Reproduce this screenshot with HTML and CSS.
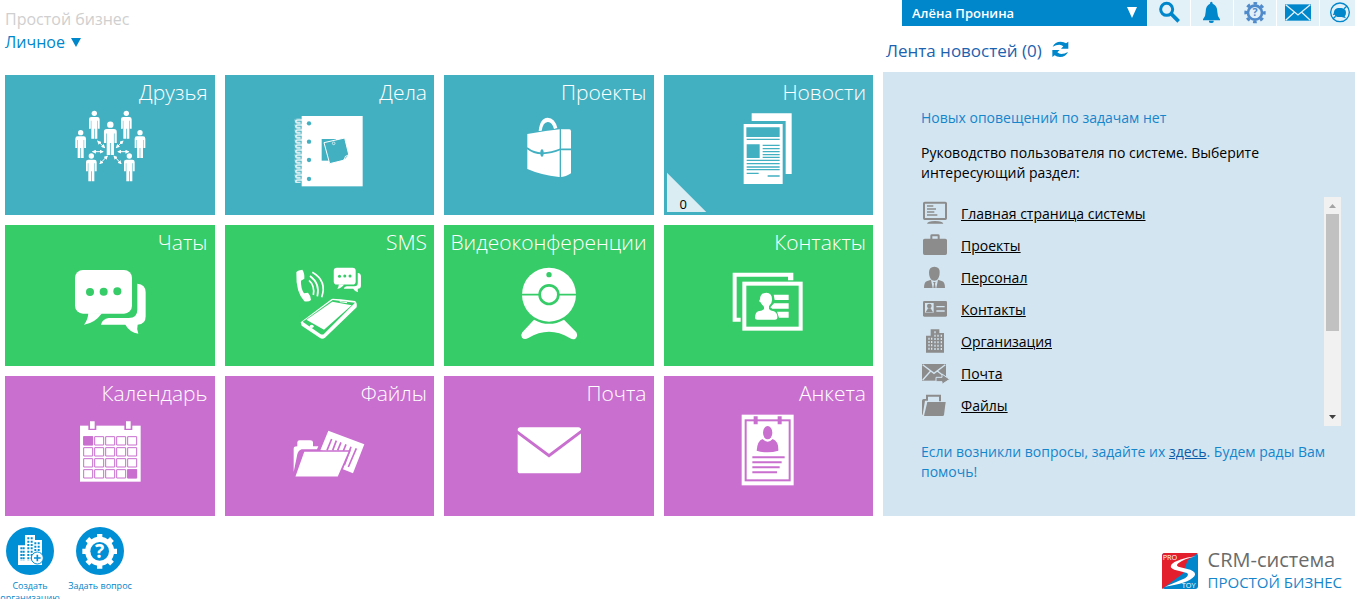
FILE: index.html
```html
<!DOCTYPE html>
<html lang="ru">
<head>
<meta charset="utf-8">
<title>Простой бизнес</title>
<link rel="stylesheet" href="styles.css">
</head>
<body>
<div class="app">
  <main class="workspace">
    <section class="left">
      <header class="heading">
        <h1 class="company">Простой бизнес</h1>
        <button class="section-menu" type="button">Личное
          <svg class="caret" viewBox="0 0 10 9" aria-hidden="true"><path d="M0 0H10L5 9Z"/></svg>
        </button>
      </header>
      <nav class="tiles">
        <a class="tile teal" href="#friends"><span class="tile-title">Друзья</span>
          <svg class="tile-icon" viewBox="209 321 240 252" aria-hidden="true">
            <defs>
              <g id="person"><circle r="8"/><path d="M-9 11H9Q16 11 16 18V46H10.500V22H9V76H1V46H-1V76H-9V22H-10.500V46H-16V18Q-16 11 -9 11Z"/></g>
              <marker id="tip" viewBox="0 0 10 10" refX="8" refY="5" markerWidth="4" markerHeight="4" orient="auto-start-reverse"><path d="M0 0L10 5L0 10Z" fill="#fff"/></marker>
            </defs>
            <use href="#person" x="282" y="340"/><use href="#person" x="378" y="340"/>
            <use href="#person" x="241" y="398"/><use href="#person" x="419" y="398"/>
            <use href="#person" x="273" y="468"/><use href="#person" x="387" y="468"/>
            <use href="#person" transform="translate(330 374) scale(1.2)"/>
            <g stroke="#fff" stroke-width="3">
              <path d="M292 423L313 443" marker-start="url(#tip)" marker-end="url(#tip)"/>
              <path d="M368 423L348 443" marker-start="url(#tip)" marker-end="url(#tip)"/>
              <path d="M277 455H308" marker-start="url(#tip)" marker-end="url(#tip)"/>
              <path d="M353 455H385" marker-start="url(#tip)" marker-end="url(#tip)"/>
              <path d="M321 468L299 491" marker-start="url(#tip)" marker-end="url(#tip)"/>
              <path d="M341 468L362 491" marker-start="url(#tip)" marker-end="url(#tip)"/>
            </g>
          </svg></a>
        <a class="tile teal" href="#todo"><span class="tile-title">Дела</span>
          <svg class="tile-icon" viewBox="868 321 240 252" aria-hidden="true">
            <defs><pattern id="spiral" x="885" y="356" width="22" height="15" patternUnits="userSpaceOnUse"><path d="M22 4H10Q3 4 3 8T10 12H18" fill="none" stroke="#fff" stroke-width="4.500"/></pattern></defs>
            <rect x="885" y="356" width="22" height="193" fill="url(#spiral)"/>
            <rect x="906" y="348" width="183" height="211"/>
            <g class="ink"><circle cx="928" cy="370" r="6.500"/><circle cx="928" cy="425" r="6.500"/><circle cx="928" cy="480" r="6.500"/><circle cx="928" cy="537" r="6.500"/>
            <path d="M966 417H1009V482H966Z"/></g>
            <path class="ink" d="M973 428L1035 414L1047 463L1031 481L990 491Z" stroke="#fff" stroke-width="3"/>
            <path d="M1048 462L1036 469L1031 482L1050 482Z"/>
            <path class="ink" d="M1046 465L1038 471L1034 479Z"/>
            <circle cx="1002" cy="430" r="4" fill="none" stroke="#fff" stroke-width="2"/>
          </svg></a>
        <a class="tile teal" href="#projects"><span class="tile-title">Проекты</span>
          <svg class="tile-icon" viewBox="206 111 240 252" aria-hidden="true">
            <path d="M295 183Q299 144 322 143Q344 144 351 174L341 177Q335 155 322 156Q308 157 304 182Z"/>
            <path d="M261 192Q310 183 358 178H387Q392 178 392 184V310Q376 322 356 321Q302 315 261 297Z"/>
            <path class="line" stroke-width="4" d="M360 177V322"/>
            <path class="line" stroke-width="5" d="M260 234Q280 250 305 250Q335 249 360 238H393"/>
            <ellipse class="ink" cx="305" cy="249" rx="5" ry="11"/>
          </svg></a>
        <a class="tile teal" href="#news"><span class="tile-title">Новости</span>
          <svg class="tile-icon" viewBox="865 111 240 252" aria-hidden="true">
            <path d="M936 130H1056V312H1038V153H936Z"/>
            <rect x="912" y="162" width="117" height="180"/>
            <path class="ink" d="M920 172H1020V201H920ZM921 223H960V264H921Z"/>
            <path class="line" stroke-width="4" d="M921 208H1020M969 226H1020M969 236H1020M969 245H1020M969 254H1020M969 262H1020M921 271H1020M921 281H1020M921 291H1020M921 299H1020M921 310H957M984 318H1020"/>
          </svg>
          <span class="corner"><span class="corner-count">0</span></span></a>
        <a class="tile green" href="#chats"><span class="tile-title">Чаты</span>
          <svg class="tile-icon" viewBox="209 112 240 252" aria-hidden="true">
            <g id="bubbles"><rect x="224" y="151" width="171" height="131" rx="24"/>
            <path d="M264 280Q263 300 251 315Q282 312 305 281Z"/>
            <path d="M411 192Q436 194 436 218V290Q436 315 412 315Q408 328 414 342Q388 338 375 315H302Q306 298 325 295H385Q411 295 411 270Z"/>
            <g fill="#36cc68"><circle cx="269" cy="217" r="12"/><circle cx="310" cy="216" r="12"/><circle cx="351" cy="215" r="12"/></g></g>
          </svg></a>
        <a class="tile green" href="#sms"><span class="tile-title">SMS</span>
          <svg class="tile-icon" viewBox="868 112 240 252" aria-hidden="true">
            <use href="#bubbles" transform="translate(916 86) scale(.385)"/>
            <path d="M890 158Q892 152 908 150Q915 160 914 177L904 183Q903 205 913 221L925 219Q935 230 934 241Q928 247 914 245Q888 218 890 158Z"/>
            <g fill="none" stroke="#fff" stroke-width="5"><path d="M928 182Q946 198 941 226"/><path d="M931 169Q962 192 953 230"/><path d="M938 158Q983 184 966 233"/></g>
            <path d="M903 308L996 238Q1000 236 1066 244Q1073 248 1071 263L976 354Q968 360 960 354L906 318Z"/>
            <path class="ink" d="M909 306L999 241L1066 249L972 344Q967 346 962 343Z"/>
            <path d="M920 300L998 246L1056 257L973 330Z"/><ellipse cx="936" cy="320" rx="6" ry="5"/><path d="M1020 246L1042 249" stroke="#fff" stroke-width="3"/>
          </svg></a>
        <a class="tile green" href="#video"><span class="tile-title">Видеоконференции</span>
          <svg class="tile-icon" viewBox="206 112 240 252" aria-hidden="true">
            <circle cx="326" cy="225" r="81"/>
            <path class="line" stroke-width="5" d="M244 225H408"/>
            <circle cx="326" cy="225" r="28" stroke="#36cc68" stroke-width="8"/>
            <circle class="ink" cx="326" cy="165" r="8"/>
            <path d="M281 300Q326 325 371 300L408 338Q414 350 405 357Q398 361 388 355Q326 318 264 355Q252 362 245 354Q240 346 246 338Z"/>
          </svg></a>
        <a class="tile green" href="#contacts"><span class="tile-title">Контакты</span>
          <svg class="tile-icon" viewBox="865 112 240 252" aria-hidden="true">
            <path d="M879 159H1061V182H1045V171H891V294H903V306H879Z"/>
            <rect x="914" y="192" width="169" height="135" fill="none" stroke="#fff" stroke-width="12"/>
            <path d="M980 219Q998 220 997 240Q998 250 988 260V268Q992 273 1003 275Q1014 280 1013 295Q1012 300 1006 300H953Q946 300 946 295Q946 278 956 275Q969 273 973 268V261Q965 254 962 247Q956 246 961 239Q961 220 980 219Z"/>
            <path d="M1002 225H1047V241H1005ZM1003 251H1047V267H998L992 263ZM1012 276H1047V294H1018Z"/>
          </svg></a>
        <a class="tile purple" href="#calendar"><span class="tile-title">Календарь</span>
          <svg class="tile-icon" viewBox="209 113 240 252" aria-hidden="true">
            <rect x="239" y="166" width="182" height="168"/>
            <path class="ink" d="M264 160H288V179H264ZM372 160H396V179H372Z"/>
            <path d="M269 153H283V175H269ZM377 153H391V175H377Z"/>
            <g class="line" stroke-width="3">
              <path d="M250 199h27v25h-27zM283 199h27v25h-27zM316 199h27v25h-27zM349 199h27v25h-27zM382 199h27v25h-27zM250 232h27v25h-27zM283 232h27v25h-27zM316 232h27v25h-27zM349 232h27v25h-27zM382 232h27v25h-27zM250 265h27v25h-27zM283 265h27v25h-27zM316 265h27v25h-27zM349 265h27v25h-27zM382 265h27v25h-27zM250 298h27v25h-27zM283 298h27v25h-27zM316 298h27v25h-27zM349 298h27v25h-27zM382 298h27v25h-27z"/>
            </g>
            <path class="ink" d="M249 198h29v27h-29zM381 297h29v27h-29z"/>
          </svg></a>
        <a class="tile purple" href="#files"><span class="tile-title">Файлы</span>
          <svg class="tile-icon" viewBox="868 113 240 252" aria-hidden="true">
            <path d="M986 181L1094 222L1060 309L1030 297L1040 260L962 240Z"/>
            <path class="line" stroke-width="5" d="M996 206L982 240M1010 211L999 240M1024 216L1014 240M1039 222L1031 242M1054 229L1034 285M1070 234L1046 290"/>
            <path d="M882 305V235Q882 228 893 228V216Q893 210 900 210H932Q940 210 940 216V228H956L952 237H906Q896 240 893 252Z"/>
            <path d="M912 242H1050L1016 321H884Z" stroke="#c96fcf" stroke-width="5"/>
          </svg></a>
        <a class="tile purple" href="#mail"><span class="tile-title">Почта</span>
          <svg class="tile-icon" viewBox="206 113 240 252" aria-hidden="true">
            <rect x="232" y="171" width="190" height="138" rx="8"/>
            <path class="line" stroke-width="9" d="M228 183L326 256L426 181"/>
          </svg></a>
        <a class="tile purple" href="#profile"><span class="tile-title">Анкета</span>
          <svg class="tile-icon" viewBox="865 113 240 252" aria-hidden="true">
            <rect x="906" y="133" width="156" height="212"/>
            <rect class="line" stroke-width="6" x="918" y="150" width="132" height="180"/>
            <g class="ink"><path d="M942 138H954V162H942ZM1014 138H1026V162H1014Z"/>
            <ellipse cx="984" cy="187" rx="14" ry="20"/>
            <path d="M969 206Q976 214 984 214Q992 214 999 206Q1017 212 1016 241Q984 251 951 241Q953 211 969 206Z"/></g>
            <path class="line" stroke-width="6" d="M938 261H1035M938 276H1026M938 291H1020M938 306H1012"/>
          </svg></a>
      </nav>
    </section>

    <aside class="right">
      <div class="toolbar">
        <div class="user">
          <select class="user-select" aria-label="Пользователь"><option>Алёна Пронина</option></select>
          <svg class="user-caret" viewBox="0 0 10 11" aria-hidden="true"><path d="M0 0H10L5 11Z"/></svg>
        </div>
        <button class="tool" type="button" aria-label="Поиск"><svg viewBox="819 0 96 78"><circle cx="860" cy="28" r="18" fill="none" stroke="#0086cb" stroke-width="9"/><path d="M873 41L896 64" stroke="#0086cb" stroke-width="11"/></svg></button>
        <button class="tool" type="button" aria-label="Уведомления"><svg viewBox="948 0 96 78"><path d="M994 5Q998 5 998 11Q1012 16 1012 36Q1012 50 1020 58V61H969V58Q977 50 977 36Q977 16 990 11Q990 5 994 5ZM987 62H1001V65Q1001 69 994 69T987 65Z"/></svg></button>
        <button class="tool" type="button" aria-label="Помощь"><svg class="soft" viewBox="1078 0 96 78"><circle cx="1126" cy="38" r="21" fill="none" stroke="#4f8acb" stroke-width="8"/><circle cx="1126" cy="38" r="28" fill="none" stroke="#4f8acb" stroke-width="8" stroke-dasharray="11 11" stroke-dashoffset="5.500"/><text class="gear-mark" x="1126" y="49" text-anchor="middle">?</text></svg></button>
        <button class="tool" type="button" aria-label="Почта"><svg viewBox="1206 0 96 78"><path d="M1215 13H1293V62H1215Z"/><path d="M1217 14L1254 45L1291 14M1217 61L1243 37M1291 61L1265 37" fill="none" stroke="#e2f0f8" stroke-width="4"/></svg></button>
        <button class="tool" type="button" aria-label="Чат"><svg viewBox="1335 0 96 78"><circle cx="1380" cy="37" r="28" fill="none" stroke="#0086cb" stroke-width="4"/><path d="M1374 24H1384Q1398 26 1398 38Q1398 45 1394 49L1398 55L1385 51H1378Q1366 51 1364 44L1358 46Q1362 40 1362 35Q1364 26 1374 24Z"/><path d="M1359 56L1367 49M1392 26L1401 18" stroke="#0086cb" stroke-width="4"/></svg></button>
      </div>
      <h2 class="feed-title">Лента новостей (0)
        <button class="refresh" type="button" aria-label="Обновить"><svg viewBox="515 122 51 51"><path d="M517 139Q524 124 541 124Q551 124 557 129L564 124V145H542L549 138Q544 133 537 133Q527 133 517 139ZM563 155Q556 170 539 170Q529 170 523 165L516 170V149H538L531 156Q536 161 543 161Q553 161 563 155Z"/></svg></button>
      </h2>
      <div class="panel">
        <p class="note">Новых оповещений по задачам нет</p>
        <p class="intro">Руководство пользователя по системе. Выберите интересующий раздел:</p>
        <div class="guide">
          <ul class="topics">
            <li class="topic"><svg viewBox="123 384 81 96"><path fill-rule="evenodd" d="M134 395H196Q201 395 201 400V445Q201 450 196 450H134Q129 450 129 445V400Q129 395 134 395ZM135 401V444H195V401ZM141 461Q143 453 165 453Q188 453 190 461Z"/><path d="M141 408H160M141 417H168M141 426H163M141 435H172" stroke="#8c8c8c" stroke-width="4"/></svg><a href="#g1">Главная страница системы</a></li>
            <li class="topic"><svg viewBox="123 480 81 96"><path fill-rule="evenodd" d="M129 511Q129 506 134 506H151V497Q151 493 156 493H174Q179 493 179 497V506H196Q201 506 201 511V550Q201 555 196 555H134Q129 555 129 550ZM157 499V506H173V499Z"/></svg><a href="#g2">Проекты</a></li>
            <li class="topic"><svg viewBox="123 576 81 96"><path d="M163 590Q180 591 179 607Q179 622 171 630Q163 634 155 630Q147 622 147 607Q147 591 163 590ZM132 654Q132 637 140 634L153 629L158 654ZM195 654Q195 637 187 634L174 629L169 654ZM159 636H167L165 641L167 654H160L162 641Z"/></svg><a href="#g3">Персонал</a></li>
            <li class="topic"><svg viewBox="123 -18 81 96"><path d="M133 3H197Q201 3 201 7V46Q201 50 197 50H133Q129 50 129 46V7Q129 3 133 3Z"/><path class="cut" d="M135 9H161V38H135Z"/><circle cx="148" cy="18" r="7"/><path d="M137 37L144 25H152L159 37Z"/><path d="M169 20H194M169 33H194" stroke="#d3e5f1" stroke-width="4"/></svg><a href="#g4">Контакты</a></li>
            <li class="topic"><svg viewBox="123 78 81 96"><path d="M138 107H152V88H178V99H192V158H138Z"/><path d="M147 113V153M155 113V153M165 94V153M174 104V153M184 104V153" stroke="#d3e5f1" stroke-width="4" stroke-dasharray="6 4"/></svg><a href="#g5">Организация</a></li>
            <li class="topic"><svg viewBox="123 174 81 96"><path d="M126 192H198V242H126Z"/><path d="M128 194L162 220L196 194M128 240L152 213M196 232L172 213" fill="none" stroke="#d3e5f1" stroke-width="4"/><path d="M168 232H186V222L209 238L186 253V245H168Z" stroke="#d3e5f1" stroke-width="3"/></svg><a href="#g6">Почта</a></li>
            <li class="topic"><svg viewBox="123 270 81 96"><path d="M126 344V302Q126 297 131 297H138V284H183V304H177V290H144V302H135L128 344Z"/><path d="M142 306H197L192 345Q191 348 188 348H132Z"/></svg><a href="#g7">Файлы</a></li>
          </ul>
          <div class="scrollbar" aria-hidden="true">
            <svg class="arrow up" viewBox="0 0 17 17"><path d="M5 11H12L8.500 7Z"/></svg>
            <div class="track"><div class="thumb"></div></div>
            <svg class="arrow down" viewBox="0 0 17 17"><path d="M5 6H12L8.500 10Z"/></svg>
          </div>
        </div>
        <p class="note">Если возникли вопросы, задайте их <a class="here" href="#ask">здесь</a>. Будем рады Вам помочь!</p>
      </div>
    </aside>
  </main>

  <footer class="footer">
    <div class="actions">
      <button class="action" type="button">
        <svg viewBox="18 36 144 144" aria-hidden="true"><circle cx="90" cy="108" r="72" class="disc"/>
          <path d="M54 91H75V60H105V75H126V150H54Z"/>
          <path d="M64 97V138M71 97V138" class="windows"/><path d="M85 67V138M95 67V138M106 82V110M116 82V110" class="windows"/>
          <circle cx="112" cy="129" r="18" stroke="#008fd5" stroke-width="3"/><path d="M102 129H122M112 119V139" class="windows solid"/></svg>
        <span>Создать организацию</span></button>
      <button class="action" type="button">
        <svg viewBox="228 36 144 144" aria-hidden="true"><circle cx="300" cy="108" r="72" class="disc"/>
          <circle cx="299" cy="109" r="34" fill="none" stroke="#fff" stroke-width="19"/>
          <path d="M299 57V161M247 109H351M262 72L336 146M262 146L336 72" stroke="#fff" stroke-width="16"/>
          <circle cx="299" cy="109" r="28" class="disc"/>
          <text class="ask-mark" x="299" y="130" text-anchor="middle">?</text></svg>
        <span class="one-line">Задать вопрос</span></button>
    </div>
    <a class="brand" href="#crm">
      <svg viewBox="63 38 108 108" aria-hidden="true">
        <rect x="63" y="38" width="108" height="108" rx="9" fill="#0086cb"/>
        <path d="M72 38H171L140 60L125 100L63 146V47Q63 38 72 38Z" fill="#e31e2d"/>
        <path d="M165 48Q110 55 92 72Q84 83 100 88L138 98Q146 104 132 114L72 139Q140 130 160 108Q168 96 148 88L112 79Q104 76 112 69Q128 56 165 48Z" fill="#fff"/>
        <text class="mini" x="65" y="60">PRO</text><text class="mini" x="122" y="143">TOY</text>
      </svg>
      <span class="brand-text"><span class="brand-crm">CRM-система</span><span class="brand-name">ПРОСТОЙ БИЗНЕС</span></span>
    </a>
  </footer>
</div>
</body>
</html>
```
FILE: styles.css
```css
* { box-sizing: border-box; }
body, h1, h2, p, ul { margin: 0; padding: 0; }
body {
  font-family: "Open Sans", "Noto Sans", sans-serif;
  font-size: 14px;
  line-height: 20px;
  color: #000;
  background: #fff;
}
button {
  border: 0;
  padding: 0;
  background: none;
  font: inherit;
  color: inherit;
  cursor: pointer;
}
svg { display: block; flex: none; }

.app {
  display: flex;
  flex-direction: column;
  height: 100vh;
  overflow: hidden;
}
.workspace {
  flex: 1;
  min-height: 0;
  display: grid;
  grid-template-columns: minmax(0, 868fr) minmax(0, 472fr);
  gap: 10px;
  padding-left: 5px;
}
.left, .right {
  display: flex;
  flex-direction: column;
  min-height: 0;
}

.heading {
  display: flex;
  flex-direction: column;
  align-items: flex-start;
  height: 75px;
  padding-top: 8px;
}
.company, .section-menu {
  font-size: 16px;
  line-height: 23px;
  font-weight: 400;
}
.company { color: #cfcfcf; }
.section-menu {
  display: flex;
  align-items: center;
  gap: 6px;
  color: #0086cb;
}
.caret { width: 10px; height: 9px; fill: #0086cb; }

.tiles {
  flex: 1;
  display: grid;
  grid-template-columns: repeat(4, minmax(0, 1fr));
  grid-template-rows: repeat(3, minmax(0, 1fr));
  gap: 10px;
}
.tile {
  position: relative;
  display: flex;
  flex-direction: column;
  align-items: center;
  color: #fff;
  text-decoration: none;
}
.teal { background: #43b0c2; --ink: #43b0c2; }
.green { background: #36cc68; --ink: #36cc68; }
.purple { background: #c96fcf; --ink: #c96fcf; }
.tile-title {
  align-self: flex-end;
  height: 32px;
  padding-right: 7px;
  font-size: 21px;
  font-weight: 300;
  line-height: 34px;
  white-space: nowrap;
}
.tile-icon { width: 80px; height: 84px; fill: #fff; }
.ink { fill: var(--ink); }
.line { fill: none; stroke: var(--ink); }
.corner {
  position: absolute;
  left: 3px;
  bottom: 3px;
  width: 40px;
  height: 40px;
  background: #d9edf3;
  clip-path: polygon(0 0, 100% 100%, 0 100%);
}
.corner-count {
  position: absolute;
  left: 13px;
  bottom: 0;
  font-size: 13px;
  line-height: 16px;
  color: #000;
}

.toolbar {
  display: flex;
  gap: 1px;
  height: 26px;
  margin-left: 19px;
  margin-right: -7px;
}
.user { position: relative; flex: 1; background: #0086cb; }
.user-select {
  appearance: none;
  width: 100%;
  height: 100%;
  border: 0;
  padding: 0 30px 0 10px;
  background: none;
  font: 600 13px/26px "Open Sans", "Noto Sans", sans-serif;
  color: #fff;
}
.user-caret {
  position: absolute;
  right: 10px;
  top: 7px;
  width: 10px;
  height: 11px;
  fill: #fff;
  pointer-events: none;
}
.tool {
  display: flex;
  justify-content: center;
  width: 42px;
  background: #e2f0f8;
}
.tool svg { width: 32px; height: 26px; fill: #0086cb; }
.tool .soft { fill: #4f8acb; }
.gear-mark { font-size: 32px; font-weight: 700; }

.feed-title {
  display: flex;
  align-items: center;
  gap: 10px;
  height: 46px;
  padding: 3px 0 0 3px;
  font-size: 17px;
  line-height: 24px;
  font-weight: 400;
  color: #1c62ae;
}
.refresh { padding-bottom: 3px; }
.refresh svg { width: 17px; height: 17px; fill: #0086cb; }

.panel {
  flex: 1;
  min-height: 0;
  display: flex;
  flex-direction: column;
  padding: 36px 14px 34px 38px;
  background: #d3e5f1;
}
.note { color: #1585cc; }
.intro { margin-top: 15px; }
.guide {
  flex: 1;
  min-height: 0;
  display: flex;
  margin: 14px 0 16px;
}
.topics {
  flex: 1;
  overflow: hidden;
  padding-top: 1px;
  list-style: none;
}
.topic { display: flex; align-items: center; gap: 13px; height: 32px; }
.topic svg { width: 27px; height: 32px; fill: #8c8c8c; overflow: visible; }
.topic .cut { fill: #d3e5f1; }
.topic a { color: #000; }
.here { color: #0a5cab; }
.scrollbar {
  display: flex;
  flex-direction: column;
  width: 17px;
  background: #f1f1f1;
}
.arrow { width: 17px; height: 17px; }
.up { fill: #a3a3a3; }
.down { fill: #404040; }
.track { flex: 1; padding: 0 2px; }
.thumb { height: 60%; background: #c1c1c1; }

.footer {
  display: flex;
  justify-content: space-between;
  align-items: flex-start;
  height: 83px;
  padding-right: 13px;
}
.actions { display: flex; gap: 10px; padding-top: 11px; }
.action {
  display: flex;
  flex-direction: column;
  align-items: center;
  gap: 5px;
  width: 60px;
  font-size: 9px;
  line-height: 12px;
  color: #0086cb;
}
.action svg { width: 48px; height: 48px; fill: #fff; }
.action .disc { fill: #008fd5; }
.one-line { white-space: nowrap; }
.windows { stroke: #008fd5; stroke-width: 6; stroke-dasharray: 6 4; }
.solid { stroke-width: 5; stroke-dasharray: none; }
.ask-mark { font-size: 58px; font-weight: 700; }
.brand {
  display: flex;
  align-items: center;
  gap: 10px;
  padding-top: 33px;
  text-decoration: none;
}
.brand svg { width: 36px; height: 36px; }
.mini { font-size: 22px; fill: #fff; }
.brand-text { display: flex; flex-direction: column; line-height: 22px; }
.brand-crm { font-size: 20px; color: #6b6b6b; }
.brand-name { font-size: 15px; color: #1585cc; }
```
